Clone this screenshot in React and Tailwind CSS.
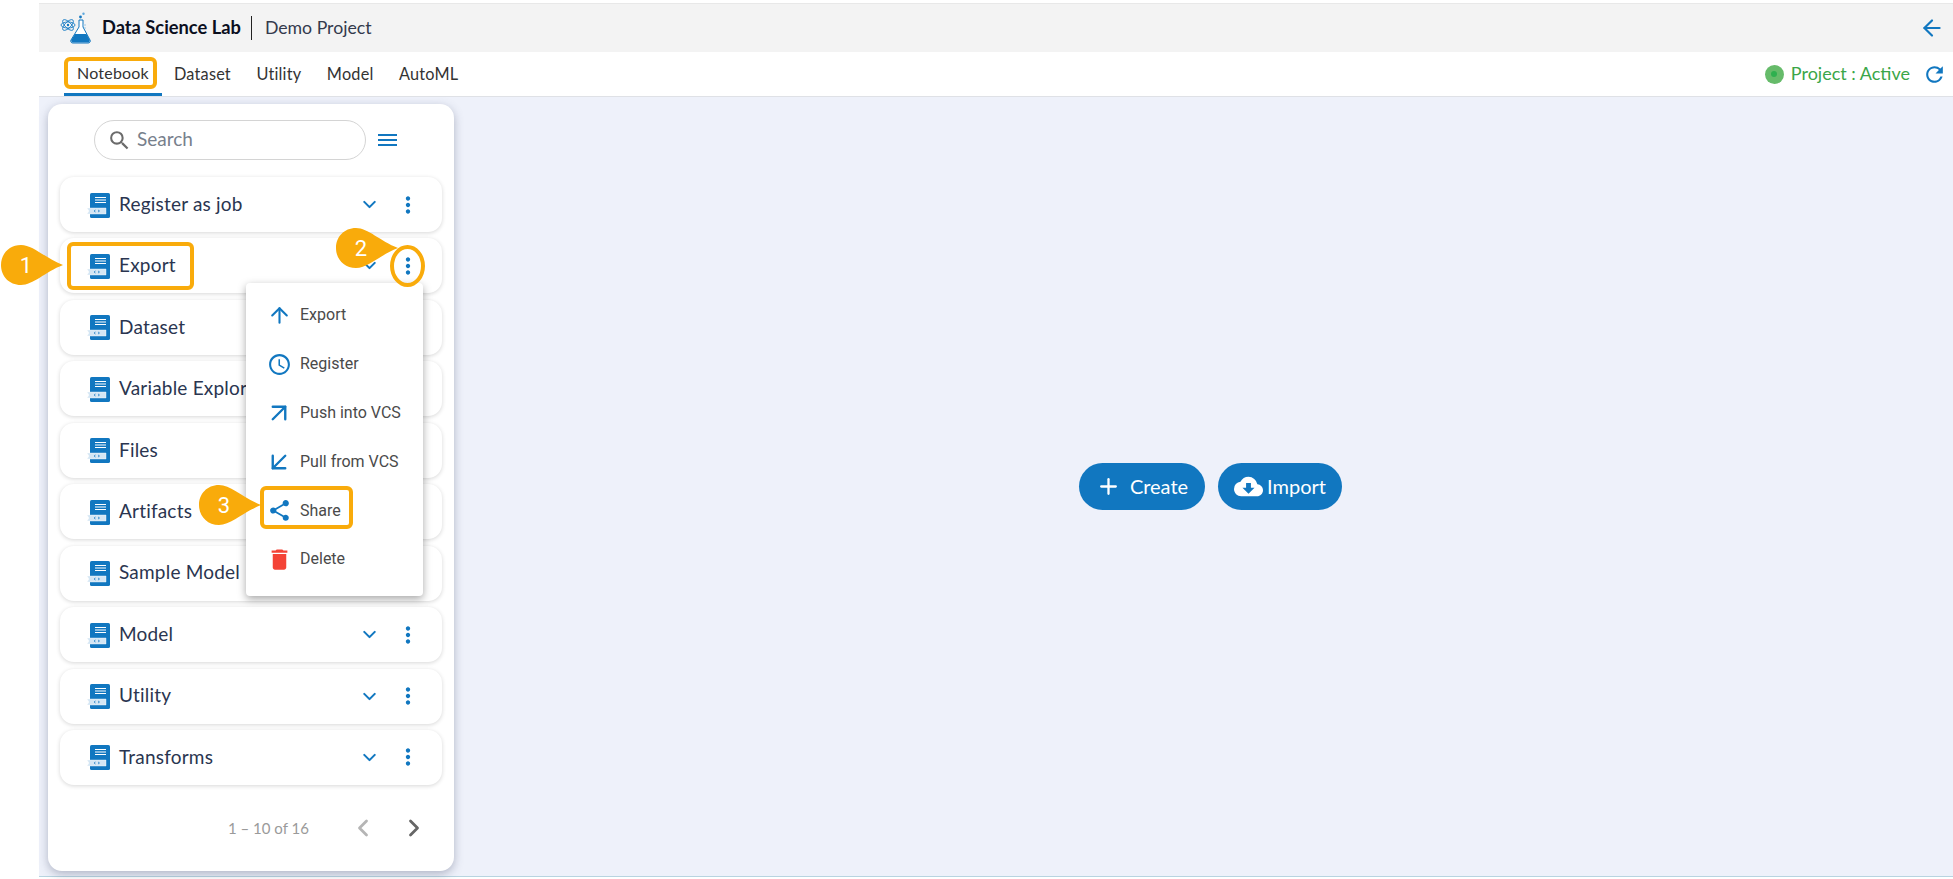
import { ArrowLeft, ArrowUp, ArrowUpRight, ArrowDownLeft, ChevronDown, ChevronLeft, ChevronRight, Plus } from "lucide-react";
import { MdAccessTime, MdCloudDownload, MdDelete, MdMoreVert, MdRefresh, MdSearch, MdShare } from "react-icons/md";

const rows = ["Register as job", "Export", "Dataset", "Variable Explorer", "Files", "Artifacts", "Sample Model", "Model", "Utility", "Transforms"];
const tabs = ["Dataset", "Utility", "Model", "AutoML"];

const menuItems = [
  { label: "Export", icon: <ArrowUp size={25} strokeWidth={2} className="text-[#1177c0]" /> },
  { label: "Register", icon: <MdAccessTime size={25} className="text-[#1177c0]" /> },
  { label: "Push into VCS", icon: <ArrowUpRight size={30} strokeWidth={1.9} className="text-[#1177c0]" /> },
  { label: "Pull from VCS", icon: <ArrowDownLeft size={30} strokeWidth={1.9} className="text-[#1177c0]" /> },
  { label: "Share", icon: <MdShare size={25} className="text-[#1177c0]" /> },
  { label: "Delete", icon: <MdDelete size={27} className="text-[#f44336]" /> },
];

function Logo() {
  return (
    <svg width="32" height="32" viewBox="0 0 32 32" fill="none" className="shrink-0">
      <g stroke="#1f80c6" strokeWidth="0.9">
        <ellipse cx="8" cy="13" rx="7" ry="3" transform="rotate(45 8 13)" />
        <ellipse cx="8" cy="13" rx="7" ry="3" transform="rotate(-45 8 13)" />
        <ellipse cx="8" cy="13" rx="7" ry="3" />
      </g>
      <circle cx="8" cy="13" r="1.2" fill="#1177c0" />
      <path d="M19 8h4v7l7 13a2 2 0 0 1-2 3H13a2 2 0 0 1-2-3l8-13z" fill="#fff" stroke="#1177c0" strokeWidth="1" />
      <path d="M15 22h11.5l3 5.5a2 2 0 0 1-2 3H13a2 2 0 0 1-1.5-3z" fill="#1177c0" />
      <path d="M23 13h3M24 16h2" stroke="#9cc7e6" strokeWidth="1" />
      <circle cx="20.5" cy="5" r="1.4" fill="#1177c0" />
      <circle cx="23.5" cy="1.8" r="1.2" fill="#5fa8dc" />
    </svg>
  );
}

function NotebookIcon() {
  return (
    <svg width="24" height="26" viewBox="0 0 24 26" className="shrink-0 mt-[2px]">
      <rect x="3" y="0" width="20" height="25" rx="1.6" fill="#1177c0" />
      <path d="M8 4.500h11M8 7h11M8 9.500h11" stroke="#fff" strokeWidth="1.200" />
      <path d="M0 15h19v6H0l2-3z" fill="#d4e6f4" stroke="#fff" strokeWidth="0.4" />
      <path d="M8.500 17l-1.500 1 1.500 1M11 17l1.500 1-1.500 1" stroke="#1177c0" strokeWidth="0.7" fill="none" />
    </svg>
  );
}

function Callout({ n, className }) {
  return (
    <div className={`absolute w-[62px] h-10 ${className}`}>
      <svg width="62" height="40" viewBox="0 0 62 40" className="absolute inset-0">
        <path d="M20 0C32 0 44 13 62 20C44 27 32 40 20 40C8 40 0 31 0 20C0 9 8 0 20 0Z" fill="#f9ab0b" />
      </svg>
      <span className="absolute left-0 top-0 w-[50px] h-10 flex items-center justify-center text-white text-[22px] font-['Roboto',sans-serif]">{n}</span>
    </div>
  );
}

function Row({ label }) {
  return (
    <div className="h-[55px] shrink-0 rounded-[14px] bg-white shadow-[0_1px_4px_rgba(0,0,0,0.16)] flex items-center pl-[27px] pr-[21px]">
      <NotebookIcon />
      <span className="ml-[8px] -mt-[1px] text-[19px] tracking-[0.2px] text-[#2a3550] flex-1">{label}</span>
      <ChevronDown size={21} strokeWidth={2.4} className="text-[#1177c0]" />
      <MdMoreVert size={26} className="text-[#1177c0] ml-[15px]" />
    </div>
  );
}

export default function App() {
  return (
    <div className="relative w-full h-[879px] overflow-hidden bg-white flex font-['Lato',sans-serif]">
      <div className="w-[39px] shrink-0" />
      <div className="flex-1 min-w-0 flex flex-col pt-[3px] pb-[2px]">
        {/* top bar */}
        <header className="h-[49px] shrink-0 bg-[#f3f3f3] border-t border-[#e8e8e8] flex items-center pl-[21px] pr-[8px]">
          <Logo />
          <span className="ml-[10px] text-[18.3px] font-bold text-[#0b0f1e]">Data Science Lab</span>
          <span className="mx-[10px] w-px h-6 bg-[#222]" />
          <span className="ml-[3px] text-[17.7px] text-[#333a4d]">Demo Project</span>
          <ArrowLeft size={26} strokeWidth={2} className="ml-auto text-[#1177c0]" />
        </header>

        {/* tabs */}
        <nav className="h-[45px] shrink-0 bg-white border-b border-[#dfe1e6] flex items-stretch pl-[25px] pr-[6px]">
          <div className="w-[98px] border-b-[3px] border-[#1177c0] flex items-center justify-center text-[16px] text-[#333] tracking-[0.2px]">Notebook</div>
          <div className="flex items-center gap-[25.5px] ml-[12px] text-[16.3px] text-[#333] tracking-[0.2px]">
            {tabs.map((t) => (
              <span key={t}>{t}</span>
            ))}
          </div>
          <div className="ml-auto flex items-center">
            <span className="w-[19px] h-[19px] rounded-full bg-[#66bb6a] flex items-center justify-center">
              <span className="w-[6px] h-[6px] rounded-full bg-[#2eb04f]" />
            </span>
            <span className="ml-[7px] -mt-[2px] text-[18px] text-[#3aa648]">Project : Active</span>
            <MdRefresh size={25} className="ml-[12px] text-[#1177c0]" />
          </div>
        </nav>

        {/* body */}
        <main className="flex-1 min-h-0 bg-[#eef1fa] border-b border-[#b8d4e0] flex pl-[9px] pt-[7px] pb-[5px]">
          <aside className="w-[406px] shrink-0 bg-white rounded-[14px] shadow-[0_3px_10px_rgba(60,70,100,0.35)] flex flex-col px-[12px]">
            <div className="flex items-center mt-[16px] ml-[34px] mb-[17px]">
              <div className="w-[272px] h-10 rounded-full border border-[#d4d4d4] flex items-center pl-[12px]">
                <MdSearch size={25} className="text-[#6b6b6b]" />
                <span className="ml-[5px] -mt-[1px] text-[19px] text-[#77808c]">Search</span>
              </div>
              <div className="ml-[12px] w-[19px] flex flex-col gap-[3px]">
                <span className="h-[2px] bg-[#1177c0]" />
                <span className="h-[2px] bg-[#1177c0]" />
                <span className="h-[2px] bg-[#1177c0]" />
              </div>
            </div>
            <div className="flex flex-col gap-[6.44px]">
              {rows.map((r) => (
                <Row key={r} label={r} />
              ))}
            </div>
            <div className="flex items-center mt-[29px] ml-[168px]">
              <span className="text-[15px] text-[#9a9a9a] w-[121px]">1 – 10 of 16</span>
              <ChevronLeft size={28} strokeWidth={2.4} className="text-[#b5b5b5]" />
              <ChevronRight size={28} strokeWidth={2.4} className="text-[#666] ml-[23px]" />
            </div>
          </aside>

          <div className="flex-1 flex items-center justify-center gap-[13px] pl-[14px] -mt-[2px]">
            <button className="w-[126px] h-[47px] rounded-full bg-[#1177c0] text-white flex items-center justify-center text-[20px]">
              <Plus size={25} strokeWidth={2.2} />
              <span className="ml-[9px] -mt-[2px]">Create</span>
            </button>
            <button className="w-[124px] h-[47px] rounded-full bg-[#1177c0] text-white flex items-center justify-center text-[20px]">
              <MdCloudDownload size={29} />
              <span className="ml-[4px] -mt-[2px]">Import</span>
            </button>
          </div>
        </main>
      </div>

      {/* action menu */}
      <div className="absolute left-[246px] top-[283px] w-[177px] h-[313px] bg-white rounded-[4px] shadow-[0_3px_8px_rgba(0,0,0,0.35)] flex flex-col pt-[8px] font-['Roboto',sans-serif]">
        {menuItems.map((m) => (
          <div key={m.label} className="h-[48.8px] flex items-center text-[16px] text-[#4a4a4a]">
            <span className="w-[54px] flex justify-center pl-[14px] pr-[2px]">{m.icon}</span>
            <span>{m.label}</span>
          </div>
        ))}
      </div>

      {/* annotations */}
      <div className="absolute left-[64px] top-[57px] w-[93px] h-[32px] rounded-[6px] border-4 border-[#f9ab0b]" />
      <div className="absolute left-[67px] top-[242px] w-[127px] h-[48px] rounded-[6px] border-4 border-[#f9ab0b]" />
      <div className="absolute left-[390px] top-[245px] w-[35px] h-[42px] rounded-[50%] border-4 border-[#f9ab0b]" />
      <div className="absolute left-[260px] top-[486px] w-[93px] h-[43px] rounded-[6px] border-4 border-[#f9ab0b]" />
      <Callout n="1" className="left-[1px] top-[245px]" />
      <Callout n="2" className="left-[336px] top-[228px]" />
      <Callout n="3" className="left-[199px] top-[485px]" />
    </div>
  );
}
